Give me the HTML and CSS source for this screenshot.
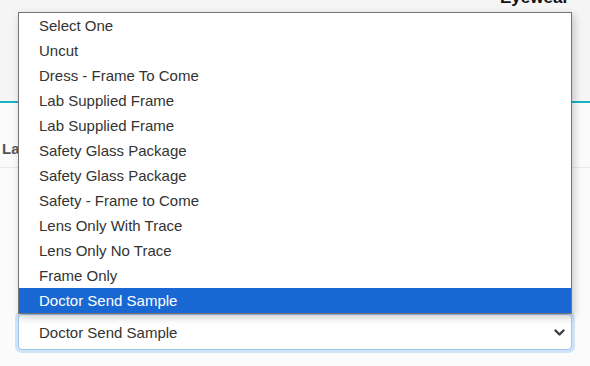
FILE: index.html
```html
<!DOCTYPE html>
<html>
<head>
<meta charset="utf-8">
<link rel="stylesheet" href="styles.css">
</head>
<body>
<div class="page">
  <header class="topbar">
    <div class="brand">Eyewear</div>
  </header>
  <div class="label-row"><span class="label">Lab</span></div>
  <div class="field">
    <div class="select">
      <span class="select-value">Doctor Send Sample</span>
      <svg class="chev" width="11" height="8" viewBox="0 0 11 8"><path d="M1.5 1.5 L5.5 5.5 L9.5 1.5" fill="none" stroke="#3a3f45" stroke-width="2.4" stroke-linecap="round" stroke-linejoin="round"/></svg>
    </div>
  </div>
  <ul class="listbox">
    <li>Select One</li>
    <li>Uncut</li>
    <li>Dress - Frame To Come</li>
    <li>Lab Supplied Frame</li>
    <li>Lab Supplied Frame</li>
    <li>Safety Glass Package</li>
    <li>Safety Glass Package</li>
    <li>Safety - Frame to Come</li>
    <li>Lens Only With Trace</li>
    <li>Lens Only No Trace</li>
    <li>Frame Only</li>
    <li class="selected">Doctor Send Sample</li>
  </ul>
</div>
</body>
</html>
```

FILE: styles.css
```css
html, body {
  margin: 0;
  padding: 0;
  background: #fbfbfb;
  font-family: "Liberation Sans", Arial, sans-serif;
}
.page {
  position: relative;
  width: 590px;
  height: 366px;
  overflow: hidden;
}
.topbar {
  height: 101px;
  background: #f5f5f5;
  border-bottom: 2px solid #17b3c4;
  display: flex;
  justify-content: flex-end;
  align-items: flex-start;
  padding-right: 21px;
}
.brand {
  font-weight: bold;
  font-size: 17px;
  color: #111;
  margin-top: -12px;
  line-height: 20px;
}
.label-row {
  box-sizing: border-box;
  height: 65px;
  border-bottom: 1px solid #e9e9e9;
  display: flex;
  align-items: flex-start;
  padding-left: 2px;
  padding-top: 36px;
}
.label {
  font-weight: bold;
  font-size: 15px;
  line-height: 20px;
  color: #555;
}
.field {
  padding-top: 146px;
  padding-left: 18px;
}
.select {
  box-sizing: border-box;
  width: 554px;
  height: 36px;
  border: 1px solid #9cc6ee;
  border-radius: 4px;
  box-shadow: 0 0 0 3px #cfe2f6;
  background: #fff;
  display: flex;
  align-items: center;
  justify-content: space-between;
  padding: 0 6px 0 20px;
}
.select-value {
  font-size: 15px;
  color: #333;
}
.chev {
  display: block;
  margin-top: 1px;
}
.listbox {
  position: absolute;
  left: 18px;
  top: 12px;
  width: 552px;
  margin: 0;
  padding: 0;
  list-style: none;
  background: #fff;
  border: 1px solid #767676;
  box-shadow: 2px 3px 8px rgba(0,0,0,0.22);
}
.listbox li {
  height: 25px;
  line-height: 25px;
  padding-left: 20px;
  font-size: 15px;
  color: #333;
}
.listbox li.selected {
  background: #1967d2;
  color: #fff;
}
```
